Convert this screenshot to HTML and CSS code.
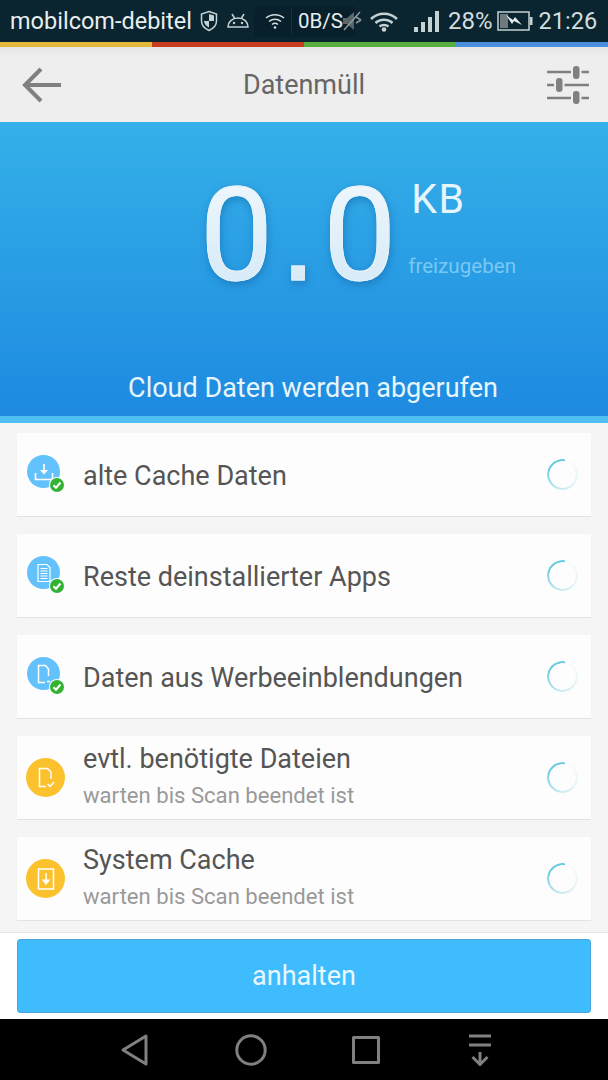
FILE: index.html
```html
<!DOCTYPE html>
<html lang="de">
<head>
    <meta charset="UTF-8">
    <meta name="viewport" content="width=device-width, initial-scale=1.0">
    <title>Datenmüll</title>
    <link rel="stylesheet" href="styles.css">
</head>
<body>
    <!-- Statusleiste -->
    <div class="statusbar">
        <span class="carrier">mobilcom-debitel</span>
        <svg class="st-shield" width="18" height="22" viewBox="0 0 18 22"><path d="M9 1.500 16.500 4v7c0 4.500-3.200 7.500-7.500 9.500C4.700 18.500 1.500 15.500 1.500 11V4Z" fill="none" stroke="#c4d2d4" stroke-width="1.500"/><path d="M9 4 14 5.500V11H9ZM9 11H4c0 3 2.200 5 5 6.500Z" fill="#c4d2d4"/></svg>
        <svg class="st-android" width="24" height="18" viewBox="0 0 24 18"><path d="M2 15c0-5 4-9 10-9s10 4 10 9Z" fill="none" stroke="#c4d2d4" stroke-width="1.500"/><path d="M6 2l2.500 4M18 2l-2.500 4" stroke="#c4d2d4" stroke-width="1.500"/><circle cx="8" cy="11" r="1.200" fill="#c4d2d4"/><circle cx="16" cy="11" r="1.200" fill="#c4d2d4"/></svg>
        <div class="st-panel">
            <svg width="22" height="18" viewBox="0 0 22 18" fill="none" stroke="#d5dedf" stroke-width="1.500"><path d="M2 6c5-4.500 13-4.500 18 0M5 9.500c3.500-3 8.500-3 12 0M8 12.500c1.800-1.400 4.200-1.400 6 0"/><circle cx="11" cy="15.500" r="1.300" fill="#d5dedf" stroke="none"/></svg>
            <span class="st-divider"></span>
            <span class="st-speed">0B/S</span>
        </div>
        <svg class="st-mute" width="20" height="24" viewBox="0 0 20 24"><path d="M1 9h4l7-6v18l-7-6H1Z" fill="#59666a"/><path d="M2 21 18 3M14 8l5 3M14 14l5-3" stroke="#8e9a9c" stroke-width="1.500" fill="none"/></svg>
        <svg class="st-wifi" width="30" height="24" viewBox="0 0 30 24" fill="none" stroke="#c4d2d4" stroke-width="2.500"><path d="M2 10c7-7 19-7 26 0M6.500 14c4.500-4.500 12.500-4.500 17 0M10.500 17.500c2.500-2 6.500-2 9 0"/><circle cx="15" cy="20.500" r="2.300" fill="#c4d2d4" stroke="none"/></svg>
        <div class="st-signal"><i class="b1"></i><i class="b2"></i><i class="b3"></i><i class="b4"></i></div>
        <span class="st-pct">28%</span>
        <svg class="st-batt" width="36" height="22" viewBox="0 0 36 22"><rect x="1" y="2" width="31" height="18" fill="none" stroke="#c4d2d4" stroke-width="1.500"/><rect x="33" y="7" width="2.500" height="8" fill="#c4d2d4"/><rect x="3" y="4" width="8" height="14" fill="#6d7b7f"/><path d="M9 5l7 5 2-3 7 8-8-4-2 3Z" fill="#e8eeee"/></svg>
        <span class="st-time">21:26</span>
    </div>
    <div class="stripe"><i class="yellow"></i><i class="red"></i><i class="green"></i><i class="blue"></i></div>

    <!-- Kopfzeile -->
    <div class="toolbar">
        <svg width="40" height="36" viewBox="0 0 40 36" fill="none" stroke="#808080" stroke-width="4"><path d="M40 18H4M20 2 4 18l16 16"/></svg>
        <span class="toolbar-title">Datenmüll</span>
        <svg width="42" height="42" viewBox="0 0 42 42" fill="none" stroke="#808080" stroke-width="2.500"><path d="M0 8h42M0 21h42M0 34h42"/><g fill="#808080" stroke="#eeeeee" stroke-width="2"><rect x="25" y="1" width="8.500" height="15" rx="4"/><rect x="8" y="13" width="8.500" height="16" rx="4"/><rect x="25" y="26" width="8.500" height="15" rx="4"/></g></svg>
    </div>

    <!-- Ergebnis -->
    <div class="hero">
        <div class="size">
            <span class="number">0<span class="dot">.</span>0</span>
            <div class="unit">
                <span class="kb">KB</span>
                <span class="free">freizugeben</span>
            </div>
        </div>
        <div class="hero-status">Cloud Daten werden abgerufen</div>
    </div>
    <div class="hero-edge"></div>

    <!-- Liste -->
    <div class="list">
        <div class="card">
            <div class="icon done">
                <svg width="20" height="20" viewBox="0 0 20 20" fill="none" stroke="#fff" stroke-width="1.600"><path d="M1.500 11v6.500h17V11M10 2v9"/><path d="M6 8h8l-4 4.500Z" fill="#fff" stroke="none"/></svg>
                <span class="check"><svg width="12" height="12" viewBox="0 0 12 12" fill="none" stroke="#fff" stroke-width="2"><path d="M2.500 6.200 5 8.700 9.500 3.500"/></svg></span>
            </div>
            <div class="card-text"><div class="card-title">alte Cache Daten</div></div>
            <div class="spinner"></div>
        </div>
        <div class="card">
            <div class="icon done">
                <svg width="20" height="20" viewBox="0 0 20 20" fill="none" stroke="#fff" stroke-width="1.200"><path d="M4 1.500h9l3 3v14H4ZM6.500 5.500h7M6.500 8h7M6.500 10.500h7M6.500 13h7M6.500 15.500h7"/></svg>
                <span class="check"><svg width="12" height="12" viewBox="0 0 12 12" fill="none" stroke="#fff" stroke-width="2"><path d="M2.500 6.200 5 8.700 9.500 3.500"/></svg></span>
            </div>
            <div class="card-text"><div class="card-title">Reste deinstallierter Apps</div></div>
            <div class="spinner"></div>
        </div>
        <div class="card">
            <div class="icon done">
                <svg width="20" height="20" viewBox="0 0 20 20" fill="none" stroke="#fff" stroke-width="1.500"><path d="M14.500 12V5l-3-3.500H4.500v17H11M13 17.500h3"/></svg>
                <span class="check"><svg width="12" height="12" viewBox="0 0 12 12" fill="none" stroke="#fff" stroke-width="2"><path d="M2.500 6.200 5 8.700 9.500 3.500"/></svg></span>
            </div>
            <div class="card-text"><div class="card-title">Daten aus Werbeeinblendungen</div></div>
            <div class="spinner"></div>
        </div>
        <div class="card">
            <div class="icon wait">
                <svg width="24" height="24" viewBox="0 0 24 24" fill="none" stroke="#fff" stroke-width="1.500"><path d="M17 13V6l-3.500-3.500H5.500v18H12M13.500 18l2.500 2.500 4-4.500"/></svg>
            </div>
            <div class="card-text">
                <div class="card-title">evtl. benötigte Dateien</div>
                <div class="card-sub">warten bis Scan beendet ist</div>
            </div>
            <div class="spinner"></div>
        </div>
        <div class="card">
            <div class="icon wait">
                <svg width="24" height="24" viewBox="0 0 24 24" fill="none" stroke="#fff" stroke-width="1.500"><path d="M4.500 2h15v20h-15ZM12 6v8"/><path d="M7.500 12.500h9L12 18Z" fill="#fff" stroke="none"/></svg>
            </div>
            <div class="card-text">
                <div class="card-title">System Cache</div>
                <div class="card-sub">warten bis Scan beendet ist</div>
            </div>
            <div class="spinner"></div>
        </div>
    </div>

    <!-- Button -->
    <div class="footer">
        <button class="stop-btn">anhalten</button>
    </div>

    <!-- Navigation -->
    <div class="navbar">
        <svg width="30" height="34" viewBox="0 0 30 34" fill="none" stroke="#808080" stroke-width="3" stroke-linejoin="round"><path d="M26 3v28L3 17Z"/></svg>
        <svg width="32" height="32" viewBox="0 0 32 32" fill="none" stroke="#808080" stroke-width="3"><circle cx="16" cy="16" r="14.200"/></svg>
        <svg width="28" height="28" viewBox="0 0 28 28" fill="none" stroke="#808080" stroke-width="3" stroke-linejoin="round"><rect x="1.500" y="1.500" width="25" height="25"/></svg>
        <svg class="nav-down" width="26" height="32" viewBox="0 0 26 32" fill="none" stroke="#808080" stroke-width="3"><path d="M2 2h22M2 11h22M13 18v13M5.500 23l7.500 7.500 7.500-7.500"/></svg>
    </div>
</body>
</html>
```

FILE: styles.css
```css
* {
    box-sizing: border-box;
}

body {
    margin: 0;
    width: 608px;
    height: 1080px;
    display: flex;
    flex-direction: column;
    overflow: hidden;
    background: #f5f5f5;
    font-family: Roboto, "Liberation Sans", sans-serif;
}

/* Statusleiste */
.statusbar {
    height: 42px;
    flex: none;
    display: flex;
    align-items: center;
    padding-left: 10px;
    background: #0a2430;
    color: #d3dddf;
}

.carrier {
    font-size: 23.500px;
    color: #e8eeee;
    width: 182px;
    white-space: nowrap;
}

.st-shield {
    margin-left: 8px;
}

.st-android {
    margin-left: 8px;
}

.st-panel {
    display: flex;
    align-items: center;
    height: 31px;
    width: 101px;
    margin-left: 4px;
    padding-left: 10px;
    background: #08202b;
}

.st-divider {
    width: 1px;
    height: 26px;
    margin: 0 6px 0 5px;
    background: #17323d;
}

.st-speed {
    font-size: 20.500px;
    color: #e8eeee;
    white-space: nowrap;
}

.st-mute {
    margin-left: -13px;
}

.st-wifi {
    margin-left: 7px;
}

.st-signal {
    display: flex;
    align-items: flex-end;
    gap: 3px;
    height: 21px;
    margin-left: 15px;
}

.st-signal i {
    width: 4px;
    background: #c4d2d4;
}

.b1 { height: 5px; }
.b2 { height: 10px; }
.b3 { height: 15px; }
.b4 { height: 21px; }

.st-pct {
    font-size: 24px;
    margin-left: 9px;
}

.st-batt {
    margin-left: 4px;
}

.st-time {
    font-size: 23.500px;
    margin-left: 6px;
    white-space: nowrap;
}

.stripe {
    height: 5px;
    flex: none;
    display: flex;
}

.stripe i {
    flex: 1;
}

.yellow { background: #e2b93b; }
.red { background: #c63c1f; }
.green { background: #55ae3e; }
.blue { background: #4a8fdc; }

/* Kopfzeile */
.toolbar {
    height: 75px;
    flex: none;
    display: flex;
    align-items: center;
    justify-content: space-between;
    padding: 0 19px 0 21px;
    background: linear-gradient(#e6e6e6, #eeeeee 12%);
}

.toolbar-title {
    font-size: 27px;
    color: #666;
}

/* Ergebnis */
.hero {
    height: 294px;
    flex: none;
    display: flex;
    flex-direction: column;
    background: linear-gradient(#35b0e9, #1d8ae0);
}

.size {
    display: flex;
    align-items: flex-start;
    height: 194px;
    margin-top: 30px;
    padding-left: 200px;
}

.number {
    font-size: 130px;
    line-height: 166px;
    letter-spacing: 7px;
    background: linear-gradient(#f4fafd, #cfe6f5);
    -webkit-background-clip: text;
    background-clip: text;
    color: transparent;
    -webkit-text-stroke: 1px #e4f2fa;
    filter: drop-shadow(1px 3px 4px rgba(10, 80, 140, 0.4));
}

/* der Punkt ist in der Vorlage eckig */
.dot {
    font-family: "Liberation Sans", sans-serif;
}

.unit {
    display: flex;
    flex-direction: column;
    margin-left: 5px;
}

.kb {
    font-size: 41px;
    line-height: 46px;
    letter-spacing: 1.500px;
    margin: 24px 0 0 3px;
    color: #e6f4fc;
}

.free {
    font-size: 20.600px;
    line-height: 24px;
    margin-top: 32px;
    color: #79c8f3;
}

.hero-status {
    font-size: 27px;
    line-height: 30px;
    margin-top: 27px;
    text-align: center;
    padding-left: 18px;
    color: #e8f5fc;
}

.hero-edge {
    height: 7px;
    flex: none;
    background: #4fbef0;
}

/* Liste */
.list {
    flex: 1;
    display: flex;
    flex-direction: column;
    gap: 17px;
    padding: 10px 17px 0;
    background: #f5f5f5;
    overflow: hidden;
}

.card {
    height: 84px;
    flex: none;
    display: flex;
    align-items: center;
    padding-left: 9px;
    background: #fdfdfd;
    border-bottom: 1px solid #e2e2e2;
}

.icon {
    flex: none;
    display: flex;
    align-items: center;
    justify-content: center;
    position: relative;
    border-radius: 50%;
}

.icon.done {
    width: 33px;
    height: 33px;
    margin: -6px 23px 0 1px;
    background: #63c2fb;
}

.icon.wait {
    width: 39px;
    height: 39px;
    margin-right: 18px;
    background: #fcc22e;
}

.check {
    position: absolute;
    right: -4px;
    bottom: -4px;
    width: 14px;
    height: 14px;
    display: flex;
    align-items: center;
    justify-content: center;
    border-radius: 50%;
    background: #34b233;
    box-shadow: 0 0 0 1px #fff;
}

.card-text {
    flex: 1;
    padding-top: 2px;
}

.card-title {
    font-size: 27px;
    line-height: 32px;
    color: #555;
}

.card-sub {
    font-size: 22.100px;
    line-height: 28px;
    margin: 6px 0 5px;
    color: #999;
}

.spinner {
    width: 31px;
    height: 31px;
    flex: none;
    margin-right: 13px;
    border-radius: 50%;
    background: conic-gradient(from 10deg, rgba(110, 205, 225, 0) 0deg, #e4f4f8 120deg, #bfe6ee 200deg, #74cfe0 280deg, #6bcadc 360deg);
    -webkit-mask: radial-gradient(circle, transparent 13px, #000 13.500px);
    mask: radial-gradient(circle, transparent 13px, #000 13.500px);
}

/* Button */
.footer {
    height: 87px;
    flex: none;
    padding: 6px 17px 0;
    background: #fff;
    border-top: 1px solid #e6e6e6;
}

.stop-btn {
    display: block;
    width: 100%;
    height: 74px;
    border: 1px solid #4aa8dc;
    border-radius: 3px;
    background: #3fbcfe;
    color: #e9f7ff;
    font-family: inherit;
    font-size: 27px;
}

/* Navigation */
.navbar {
    height: 61px;
    flex: none;
    display: flex;
    align-items: center;
    padding-left: 120px;
    gap: 85px;
    background: #000;
}

.nav-down {
    margin-left: 2px;
}
```
